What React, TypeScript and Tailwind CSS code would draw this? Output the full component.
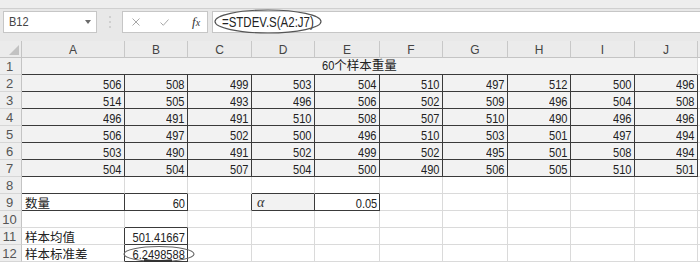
import React from "react";

const COLS = ["A", "B", "C", "D", "E", "F", "G", "H", "I", "J"];
const DATA = [
  [506, 508, 499, 503, 504, 510, 497, 512, 500, 496],
  [514, 505, 493, 496, 506, 502, 509, 496, 504, 508],
  [496, 491, 491, 510, 508, 507, 510, 490, 496, 496],
  [506, 497, 502, 500, 496, 510, 503, 501, 497, 494],
  [503, 490, 491, 502, 499, 502, 495, 501, 508, 494],
  [504, 504, 507, 504, 500, 490, 506, 505, 510, 501],
];

const NUM = "flex items-end justify-end pr-[2px] leading-[12px] text-[13.5px] font-['Liberation_Sans',sans-serif] text-[#222]";
const CJK = "flex items-end pl-[3px] pb-[1px] leading-[13px] text-[12.5px] font-['Noto_Sans_CJK_SC',sans-serif] text-[#222]";
const SQUEEZE = "inline-block origin-right scale-x-[0.82]";

type CellProps = {
  r?: boolean;
  b?: boolean;
  fill?: boolean;
  className?: string;
  children?: React.ReactNode;
};

function Cell({ r = false, b = false, fill = false, className = "", children }: CellProps) {
  return (
    <div
      className={`h-[17px] border-r border-b whitespace-nowrap overflow-visible ${
        r ? "border-r-[#3a3a3a]" : "border-r-[#dadada]"
      } ${b ? "border-b-[#3a3a3a]" : "border-b-[#dadada]"} ${fill ? "bg-[#f2f2f2]" : "bg-white"} ${className}`}
    >
      {children}
    </div>
  );
}

function RowHead({ n }: { n: number }) {
  return (
    <div className="h-[17px] bg-[#eeeeee] border-r border-b border-r-[#c4c4c4] border-b-[#d6d6d6] flex items-end justify-center pr-[2px] leading-[14px] text-[13px] text-[#555] font-['Liberation_Sans',sans-serif]">
      {n}
    </div>
  );
}

function Extra() {
  return <div className="h-[17px] bg-white border-b border-b-[#dadada]" />;
}

export default function App() {
  const lower: Array<Array<CellProps>> = [];
  for (let r = 8; r <= 12; r++) {
    const row: CellProps[] = [];
    for (let c = 0; c < 10; c++) {
      let right = false;
      let bottom = false;
      let fill = false;
      if (r === 8) bottom = c === 0 || c === 1 || c === 3 || c === 4;
      if (r === 9) {
        right = c <= 4;
        bottom = c === 0 || c === 1 || c === 3 || c === 4;
        fill = c === 3;
      }
      if (r === 10) bottom = c === 1;
      if (r === 11 || r === 12) {
        right = c === 0 || c === 1;
        bottom = c === 1;
      }
      row.push({ r: right, b: bottom, fill });
    }
    lower.push(row);
  }

  const content: Record<string, React.ReactNode> = {
    "9-0": <span>数量</span>,
    "9-1": <span className={SQUEEZE}>60</span>,
    "9-3": <span>α</span>,
    "9-4": <span className={SQUEEZE}>0.05</span>,
    "11-0": <span>样本均值</span>,
    "11-1": <span className={SQUEEZE}>501.41667</span>,
    "12-0": <span>样本标准差</span>,
    "12-1": <span className={SQUEEZE}>6.2498588</span>,
  };
  const cls: Record<string, string> = {
    "9-0": CJK,
    "9-1": NUM,
    "9-3": "flex items-end pl-[5px] pb-[1px] leading-[13px] text-[14px] italic font-['Liberation_Serif',serif] text-[#333]",
    "9-4": NUM,
    "11-0": CJK,
    "11-1": NUM,
    "12-0": CJK,
    "12-1": NUM,
  };

  return (
    <div className="relative w-[700px] h-[262px] overflow-hidden bg-white font-['Liberation_Sans',sans-serif]">
      {/* toolbar */}
      <div className="h-[41px] bg-[#e8e8e8] flex flex-col">
        <div className="h-[9px] bg-[#eeeeee] border-b border-[#d0d0d0]" />
        <div className="flex items-start pt-[2px]">
          <div className="ml-[3px] w-[94px] h-[22px] bg-white border border-[#c6c6c6] flex items-center justify-between pl-[5px] pr-[5px]">
            <span className="inline-block origin-left scale-x-[0.85] text-[13px] leading-[14px] text-[#444]">B12</span>
            <svg width="6" height="4" viewBox="0 0 6 4">
              <path d="M0 0 L6 0 L3 4 Z" fill="#6a6a6a" />
            </svg>
          </div>
          <div className="w-[25px] h-[22px] flex items-center justify-center">
            <svg width="2" height="14" viewBox="0 0 2 14">
              <rect x="0.5" y="1" width="1" height="2" fill="#b5b5b5" />
              <rect x="0.5" y="6" width="1" height="2" fill="#b5b5b5" />
              <rect x="0.5" y="11" width="1" height="2" fill="#b5b5b5" />
            </svg>
          </div>
          <div className="w-[86px] h-[22px] bg-white border border-[#c6c6c6] flex items-center pl-[9px]">
            <svg width="8" height="8" viewBox="0 0 8 8">
              <path d="M0.5 0.5 L7.5 7.5 M7.5 0.5 L0.5 7.5" stroke="#a8a8a8" strokeWidth="1" />
            </svg>
            <svg className="ml-[20px]" width="9" height="7" viewBox="0 0 9 7">
              <path d="M0.5 3.5 L3.3 6.3 L8.5 0.5" stroke="#a8a8a8" strokeWidth="1" fill="none" />
            </svg>
            <span className="ml-[23px] italic text-[13px] leading-[14px] text-[#333] font-['Liberation_Serif',serif]">
              f<span className="text-[10px]">x</span>
            </span>
          </div>
          <div className="ml-[4px] flex-1 h-[22px] bg-white border border-r-0 border-[#c6c6c6] flex items-center pl-[9px]">
            <span className="inline-block origin-left scale-x-[0.82] text-[14px] leading-[15px] text-[#222]">
              =STDEV.S(A2:J7)
            </span>
          </div>
        </div>
      </div>

      {/* sheet */}
      <div className="grid grid-cols-[22px_103px_63px_64px_63px_65px_63px_65px_63px_64px_63px_2px]">
        {/* header row */}
        <div className="h-[17px] bg-[#ebebeb] border-r border-b border-r-[#c4c4c4] border-b-[#c4c4c4] flex items-end justify-end pr-[2px] pb-[2px]">
          <svg width="10" height="10" viewBox="0 0 10 10">
            <path d="M10 0 L10 10 L0 10 Z" fill="#c2c2c2" />
          </svg>
        </div>
        {COLS.map((c) => (
          <div
            key={c}
            className="h-[17px] bg-[#ebebeb] border-r border-b border-r-[#c8c8c8] border-b-[#c4c4c4] flex items-end justify-center leading-[14px] text-[12px] text-[#444]"
          >
            {c}
          </div>
        ))}
        <div className="h-[17px] bg-[#ebebeb] border-b border-b-[#c4c4c4]" />

        {/* row 1 merged */}
        <RowHead n={1} />
        <div className="col-span-10 h-[17px] bg-[#f2f2f2] border-r border-b border-r-[#dadada] border-b-[#3a3a3a] flex items-end justify-center leading-[13px] pb-[1px] text-[12.5px] text-[#222]">
          <span>
            <span className="inline-block origin-left scale-x-[0.82] -mr-[3px] text-[13.5px]">60</span>
            <span className="font-['Noto_Sans_CJK_SC',sans-serif]">个样本重量</span>
          </span>
        </div>
        <Extra />

        {/* rows 2-7 */}
        {DATA.map((row, i) => (
          <React.Fragment key={i}>
            <RowHead n={i + 2} />
            {row.map((v, j) => (
              <Cell key={j} r b fill className={NUM}>
                <span className={SQUEEZE}>{v}</span>
              </Cell>
            ))}
            <Extra />
          </React.Fragment>
        ))}

        {/* rows 8-12 */}
        {lower.map((row, i) => {
          const rn = i + 8;
          return (
            <React.Fragment key={rn}>
              <RowHead n={rn} />
              {row.map((p, j) => (
                <Cell key={j} r={p.r} b={p.b} fill={p.fill} className={cls[`${rn}-${j}`] ?? ""}>
                  {content[`${rn}-${j}`]}
                </Cell>
              ))}
              <Extra />
            </React.Fragment>
          );
        })}
      </div>

      {/* annotation ellipses */}
      <svg className="absolute left-[213px] top-[8px]" width="110" height="28" viewBox="0 0 110 28">
        <ellipse cx="55" cy="13.5" rx="53" ry="11.5" fill="none" stroke="#555" strokeWidth="1.2" />
      </svg>
      <svg className="absolute left-[120px] top-[243px]" width="80" height="22" viewBox="0 0 80 22">
        <ellipse cx="39" cy="11" rx="35" ry="7.5" fill="none" stroke="#666" strokeWidth="1.1" />
        <path d="M24 17.6 Q39 19.2 52 17.8" fill="none" stroke="#333" strokeWidth="3" />
      </svg>
    </div>
  );
}
